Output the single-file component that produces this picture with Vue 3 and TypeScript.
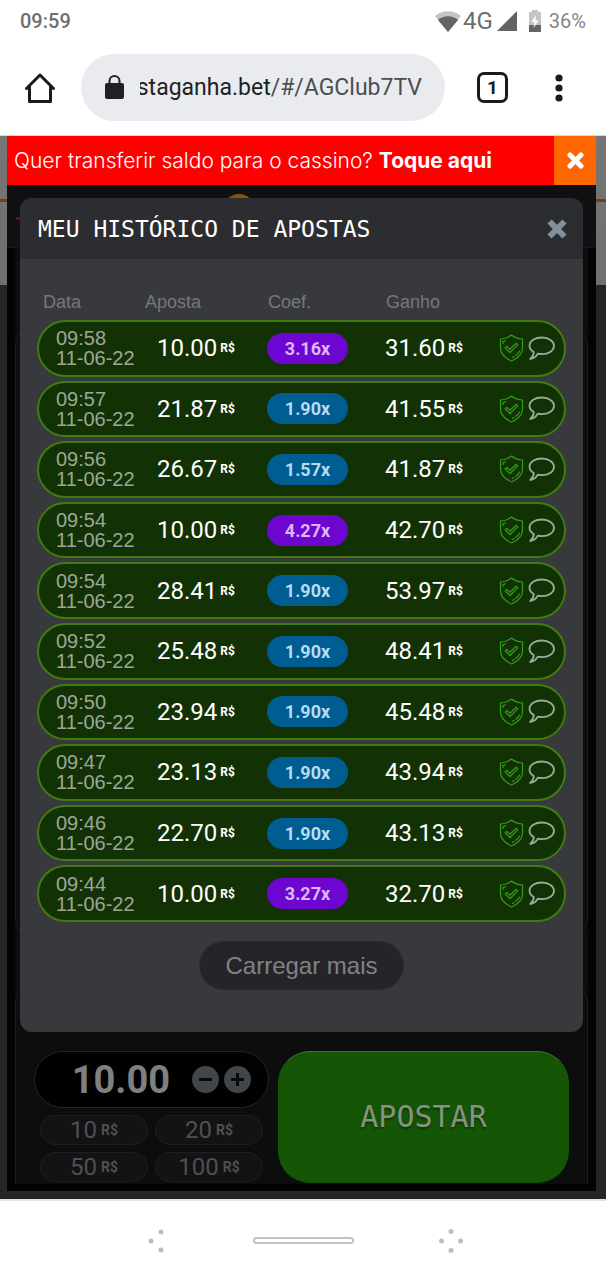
<script setup lang="ts">
import { ref } from 'vue'

interface Bet {
  time: string
  date: string
  stake: string
  coef: string
  win: string
}

const currency = 'R$'
const day = '11-06-22'

const bets: Bet[] = [
  { time: '09:58', date: day, stake: '10.00', coef: '3.16', win: '31.60' },
  { time: '09:57', date: day, stake: '21.87', coef: '1.90', win: '41.55' },
  { time: '09:56', date: day, stake: '26.67', coef: '1.57', win: '41.87' },
  { time: '09:54', date: day, stake: '10.00', coef: '4.27', win: '42.70' },
  { time: '09:54', date: day, stake: '28.41', coef: '1.90', win: '53.97' },
  { time: '09:52', date: day, stake: '25.48', coef: '1.90', win: '48.41' },
  { time: '09:50', date: day, stake: '23.94', coef: '1.90', win: '45.48' },
  { time: '09:47', date: day, stake: '23.13', coef: '1.90', win: '43.94' },
  { time: '09:46', date: day, stake: '22.70', coef: '1.90', win: '43.13' },
  { time: '09:44', date: day, stake: '10.00', coef: '3.27', win: '32.70' },
]

const presets = [10, 20, 50, 100]
const amount = ref('10.00')

const isHigh = (coef: string) => Number(coef) >= 2

function setAmount(value: number) {
  amount.value = Math.max(1, value).toFixed(2)
}
</script>

<template>
  <div class="phone">
    <header class="status">
      <span class="clock">09:59</span>
      <div class="signals">
        <svg class="wifi" viewBox="0 0 26 21" aria-hidden="true">
          <path d="M0 5C7-1.500 19-1.500 26 5L13 21z" fill="#c4c4c4" />
          <path d="M3 9C9 4 17 4 23 9L13 21z" fill="#636363" />
        </svg>
        <span class="network">4G</span>
        <svg class="cell" viewBox="0 0 20 20" aria-hidden="true"><path d="M20 0v20H0z" fill="#636363" /></svg>
        <svg class="battery" viewBox="0 0 12 22" aria-hidden="true">
          <path d="M3 0h6v2h3v13H0V2h3z" fill="#c4c4c4" />
          <path d="M0 15h12v7H0z" fill="#636363" />
          <path d="M7 5 2.500 12H5.500L4.500 18 9.500 10.500H6.500z" fill="#fff" />
        </svg>
        <span class="percent">36%</span>
      </div>
    </header>

    <nav class="toolbar" aria-label="Navegador">
      <button class="bare" type="button" aria-label="Página inicial">
        <svg width="32" height="32" viewBox="0 0 32 32" fill="none" stroke="#1b1b1b" stroke-width="3" stroke-linejoin="round" stroke-linecap="round">
          <path d="M2.500 16.500 16 3l13.500 13.500M5.500 15v14.500h21V15" />
        </svg>
      </button>
      <button class="address" type="button">
        <svg width="19" height="25" viewBox="0 0 19 25" aria-hidden="true">
          <rect x="0" y="8" width="19" height="16" rx="2" fill="#202124" />
          <path d="M4.500 9V6a5 5 0 0 1 10 0v3" fill="none" stroke="#202124" stroke-width="2" />
        </svg>
        <span class="url"><span class="host">staganha.bet</span>/#/AGClub7TV</span>
      </button>
      <button class="tabs" type="button" aria-label="Abas">1</button>
      <button class="bare menu" type="button" aria-label="Menu">
        <svg width="8" height="28" viewBox="0 0 8 28" fill="#1b1b1b">
          <circle cx="4" cy="4" r="3.600" /><circle cx="4" cy="14" r="3.600" /><circle cx="4" cy="24" r="3.600" />
        </svg>
      </button>
    </nav>

    <main class="page">
      <div class="stage">
        <div class="banner">
          <p>Quer transferir saldo para o cassino? <a href="#cassino">Toque aqui</a></p>
          <button type="button" aria-label="Fechar aviso">
            <svg width="17" height="17" viewBox="0 0 17 17" stroke="#fff" stroke-width="5" stroke-linecap="round">
              <path d="M3 3l11 11M14 3 3 14" />
            </svg>
          </button>
        </div>

        <div class="game">
          <div class="gamebar" aria-hidden="true"><i class="dash"></i><i class="coin"></i></div>
          <div class="outline first" aria-hidden="true"></div>
          <div class="outline second" aria-hidden="true"></div>

          <section class="modal" role="dialog" aria-labelledby="history-title">
            <div class="modal-head">
              <h1 id="history-title">MEU HISTÓRICO DE APOSTAS</h1>
              <button class="bare" type="button" aria-label="Fechar">
                <svg width="20" height="20" viewBox="0 0 20 20" stroke="#83909b" stroke-width="6">
                  <path d="M2.500 2.500l15 15M17.500 2.500l-15 15" />
                </svg>
              </button>
            </div>

            <div class="modal-body">
              <table>
                <thead>
                  <tr>
                    <th scope="col">Data</th>
                    <th scope="col">Aposta</th>
                    <th scope="col">Coef.</th>
                    <th scope="col">Ganho</th>
                  </tr>
                </thead>
                <tbody>
                  <tr v-for="(bet, i) in bets" :key="i">
                    <td class="when"><span>{{ bet.time }}</span><span>{{ bet.date }}</span></td>
                    <td class="money stake">{{ bet.stake }}<small>{{ currency }}</small></td>
                    <td><span class="coef" :class="{ high: isHigh(bet.coef) }">{{ bet.coef }}x</span></td>
                    <td class="money">{{ bet.win }}<small>{{ currency }}</small></td>
                    <td class="actions">
                      <button class="bare" type="button" aria-label="Verificar">
                        <svg width="25" height="28" viewBox="0 0 25 28" fill="none" stroke="#339c1a" stroke-width="1.200" stroke-linejoin="round" stroke-linecap="round">
                          <path d="M12.500 1C9.500 3.500 5.500 4.800 1.500 5v9c0 6 4.500 10 11 13 6.500-3 11-7 11-13V5c-4-.2-8-1.500-11-4z" />
                          <path d="M4 9.500V7.500l2.500-.6M20.500 17c-.8 1.800-2 3.200-3.700 4.300M15 22.500l-1.500.9" />
                          <path d="M6.200 14l1.700-1.600 3.100 2.900 6.200-6 1.600 1.600-7.800 7.600z" />
                        </svg>
                      </button>
                      <button class="bare" type="button" aria-label="Compartilhar no chat">
                        <svg width="27" height="25" viewBox="0 0 27 25" fill="none" stroke="#9aaa98" stroke-width="1.800" stroke-linejoin="round">
                          <path d="M14 1.500C7 1.500 1.500 5 1.500 9.800c0 2.600 1.600 4.800 4.300 6.200.1 2.600-1.300 5-3.600 7 3.400-.5 6.200-2.300 7.600-5.300 1.300.3 2.700.5 4.200.5 6.800 0 12-3.800 12-8.400S20.800 1.500 14 1.500z" />
                        </svg>
                      </button>
                    </td>
                  </tr>
                </tbody>
              </table>
              <button class="more" type="button">Carregar mais</button>
            </div>
          </section>

          <form class="bet" @submit.prevent>
            <div class="controls">
              <div class="amount">
                <input v-model="amount" type="text" size="5" inputmode="decimal" aria-label="Valor da aposta" />
                <button type="button" aria-label="Diminuir" @click="setAmount(Number(amount) - 1)">
                  <svg width="15" height="15" viewBox="0 0 15 15" stroke="#08090b" stroke-width="3"><path d="M1 7.500h13" /></svg>
                </button>
                <button type="button" aria-label="Aumentar" @click="setAmount(Number(amount) + 1)">
                  <svg width="15" height="15" viewBox="0 0 15 15" stroke="#08090b" stroke-width="3"><path d="M1 7.500h13M7.500 1v13" /></svg>
                </button>
              </div>
              <div class="presets">
                <button v-for="value in presets" :key="value" type="button" @click="setAmount(value)">
                  {{ value }}<small>{{ currency }}</small>
                </button>
              </div>
            </div>
            <button class="place" type="submit">APOSTAR</button>
          </form>
        </div>
      </div>
    </main>

    <nav class="system" aria-label="Sistema">
      <button class="bare" type="button" aria-label="Voltar">
        <svg width="24" height="24" viewBox="0 0 24 24" fill="#bdbdbd">
          <circle cx="7" cy="12" r="2.500" /><circle cx="17" cy="3" r="2.500" /><circle cx="17" cy="21" r="2.500" />
        </svg>
      </button>
      <button class="home" type="button" aria-label="Início"></button>
      <button class="bare" type="button" aria-label="Recentes">
        <svg width="24" height="24" viewBox="0 0 24 24" fill="#bdbdbd">
          <circle cx="12" cy="2.500" r="2.500" /><circle cx="2.500" cy="12" r="2.500" /><circle cx="21.500" cy="12" r="2.500" /><circle cx="12" cy="21.500" r="2.500" />
        </svg>
      </button>
    </nav>
  </div>
</template>

<style>
body {
  margin: 0;
  background: #fff;
}
</style>

<style scoped>
* {
  box-sizing: border-box;
}
button,
input {
  margin: 0;
  padding: 0;
  border: 0;
  background: none;
  color: inherit;
  font: inherit;
}
svg {
  display: block;
  flex: none;
}
.phone {
  display: flex;
  flex-direction: column;
  min-height: 100vh;
  font-family: "Liberation Sans", Arial, sans-serif;
  background: #fff;
}
.bare {
  display: flex;
  align-items: center;
  justify-content: center;
}

/* status bar */
.status {
  display: flex;
  align-items: center;
  justify-content: space-between;
  height: 42px;
  padding: 0 20px;
  font: 500 20px/24px Roboto, sans-serif;
  color: #6e6e6e;
}
.signals {
  display: flex;
  align-items: center;
}
.wifi {
  width: 26px;
  height: 21px;
}
.network {
  margin: 0 4px 0 2px;
  font: 24px/28px Roboto, sans-serif;
}
.cell {
  width: 20px;
  height: 20px;
}
.battery {
  width: 12px;
  height: 22px;
  margin: 0 8px 0 12px;
}
.percent {
  font-weight: 400;
  color: #858585;
}

/* browser toolbar */
.toolbar {
  display: flex;
  align-items: center;
  height: 94px;
  padding: 0 43px 2px 24px;
  border-bottom: 1px solid #d8d4d0;
}
.address {
  display: flex;
  flex: 1;
  align-items: center;
  gap: 16px;
  min-width: 0;
  height: 67px;
  margin: 0 32px 0 25px;
  padding: 0 23px 0 24px;
  border-radius: 34px;
  background: #e9ebef;
}
.url {
  display: flex;
  flex: 1;
  justify-content: flex-end;
  min-width: 0;
  overflow: hidden;
  font: 23px/32px Roboto, sans-serif;
  color: #4c4e52;
  white-space: nowrap;
}
.host {
  color: #202124;
}
.tabs {
  width: 31px;
  height: 31px;
  border: 3px solid #1b1b1b;
  border-radius: 7px;
  font: 700 19px/24px Roboto, sans-serif;
  color: #1b1b1b;
}
.menu {
  margin-left: 47px;
}

/* dimmed site behind the game */
.page {
  padding: 0 10px 8px 7px;
  background:
    linear-gradient(#7b3d0d, #7b3d0d) 0 63px / 100% 3px no-repeat,
    linear-gradient(#757575, #707070) 0 0 / 100% 149px no-repeat,
    #252525;
}
.stage {
  padding-bottom: 7px;
  background: #030303;
}
.banner {
  display: flex;
  height: 49px;
  background: #fe0000;
  color: #fff;
}
.banner p {
  flex: 1;
  margin: 0;
  padding-left: 7px;
  font: 300 21px/50px Inter, sans-serif;
  white-space: nowrap;
}
.banner a {
  font-weight: 700;
  color: inherit;
  text-decoration: none;
}
.banner button {
  display: flex;
  align-items: center;
  justify-content: center;
  width: 42px;
  background: #ff6700;
}

/* game */
.game {
  position: relative;
  padding: 13px 13px 1px;
  background: linear-gradient(90deg, #030303 7px, #0c0e0e 9px calc(100% - 9px), #030303 calc(100% - 7px));
}
.gamebar {
  position: absolute;
  inset: 0 0 auto;
  height: 63px;
  overflow: hidden;
  background: #0f1011;
  border-bottom: 1px solid #17181a;
}
.dash {
  position: absolute;
  top: 32px;
  left: 9px;
  width: 6px;
  height: 3px;
  background: #7a0718;
}
.coin {
  position: absolute;
  top: 9px;
  left: 216px;
  width: 32px;
  height: 32px;
  border-radius: 50%;
  background: #86540f;
}
.outline {
  position: absolute;
  left: 8px;
  right: 8px;
  border: 1px solid #1b1d1e;
  border-radius: 26px;
}
.outline.first {
  top: 136px;
  bottom: 241px;
}
.outline.second {
  bottom: 0;
  height: 206px;
  border-bottom: 0;
  border-radius: 26px 26px 0 0;
}
.modal {
  position: relative;
  overflow: hidden;
  border-radius: 12px;
  background: #38393d;
}
.modal-head {
  display: flex;
  align-items: center;
  justify-content: space-between;
  height: 61px;
  padding: 0 16px 0 18px;
  background: #2c2d30;
}
h1 {
  margin: 0;
  font: 23px/32px "DejaVu Sans Mono", monospace;
  color: #fff;
  white-space: nowrap;
}
.modal-body {
  display: flex;
  flex-direction: column;
  align-items: center;
  padding: 30px 17px 42px;
}
table,
thead,
tbody {
  display: grid;
  width: 100%;
}
tbody {
  grid-auto-rows: 1fr;
  gap: 4px;
  height: 602px;
}
tr {
  display: grid;
  grid-template-columns: 105fr 123fr 118fr 114fr 65fr;
  align-items: center;
  border: 2px solid transparent;
}
tbody tr {
  border-color: #417b10;
  border-radius: 29px;
  background: #123205;
}
th,
td {
  padding: 0;
}
th {
  padding: 0 0 5px 1px;
  font: 18px/22px "Liberation Sans", Arial, sans-serif;
  color: #76777b;
  text-align: left;
}
th:first-child {
  padding-left: 4px;
}
.when {
  display: grid;
  padding-left: 17px;
  font-size: 20px;
  line-height: 20px;
  color: #9ca796;
}
.money {
  display: flex;
  align-items: center;
  gap: 3px;
  font: 24px/28px Roboto, sans-serif;
  color: #fff;
}
.stake {
  padding-left: 13px;
}
small {
  font: 700 12px/20px Roboto, sans-serif;
}
.coef {
  display: block;
  width: 81px;
  border-radius: 16px;
  background: #005d91;
  font: 700 18px/31px Roboto, sans-serif;
  color: #b4dcf2;
  text-align: center;
}
.coef.high {
  background: #6c06d0;
  color: #ddb6f5;
}
.actions {
  display: flex;
  align-items: center;
  gap: 4px;
}
.more {
  margin-top: 19px;
  padding: 0 25px;
  border: 1px solid #2b2c30;
  border-radius: 25px;
  background: #252529;
  font-size: 24px;
  line-height: 47px;
  color: #818286;
}

/* bet panel */
.bet {
  position: relative;
  display: grid;
  grid-template-columns: minmax(0, 235fr) minmax(0, 291fr);
  gap: 9px;
  padding: 19px 14px 0;
}
.amount {
  display: flex;
  align-items: center;
  gap: 5px;
  height: 57px;
  padding-right: 17px;
  border: 1px solid #242526;
  border-radius: 29px;
  background: #010101;
}
.amount input {
  flex: 1;
  min-width: 0;
  margin-right: 17px;
  font: 700 38px/50px Roboto, sans-serif;
  color: #808080;
  text-align: right;
}
.amount button {
  display: flex;
  flex: none;
  align-items: center;
  justify-content: center;
  width: 27px;
  height: 27px;
  border-radius: 50%;
  background: #42464b;
}
.presets {
  display: grid;
  grid-template-columns: 1fr 1fr;
  gap: 7px;
  padding: 7px 6px 1px;
}
.presets button {
  display: flex;
  align-items: center;
  justify-content: center;
  gap: 4px;
  height: 30px;
  border: 1px solid #1e1f20;
  border-radius: 15px;
  background: #121314;
  font: 24px/28px Roboto, sans-serif;
  color: #505051;
}
.presets small {
  font-size: 14px;
}
.place {
  border: 1px solid #155606;
  border-top-color: #3b7430;
  border-radius: 32px;
  background: #155606;
  font: 30px/40px "DejaVu Sans Mono", monospace;
  color: #84937f;
  text-shadow: 0 2px 2px #0c3303;
}

/* system navigation */
.system {
  display: flex;
  flex: 1;
  align-items: center;
  justify-content: center;
  gap: 85px;
  min-height: 80px;
  border-top: 2px solid #e4e2e4;
}
.home {
  width: 101px;
  height: 7px;
  border: 2px solid #c2c2c2;
  border-radius: 4px;
}
</style>
